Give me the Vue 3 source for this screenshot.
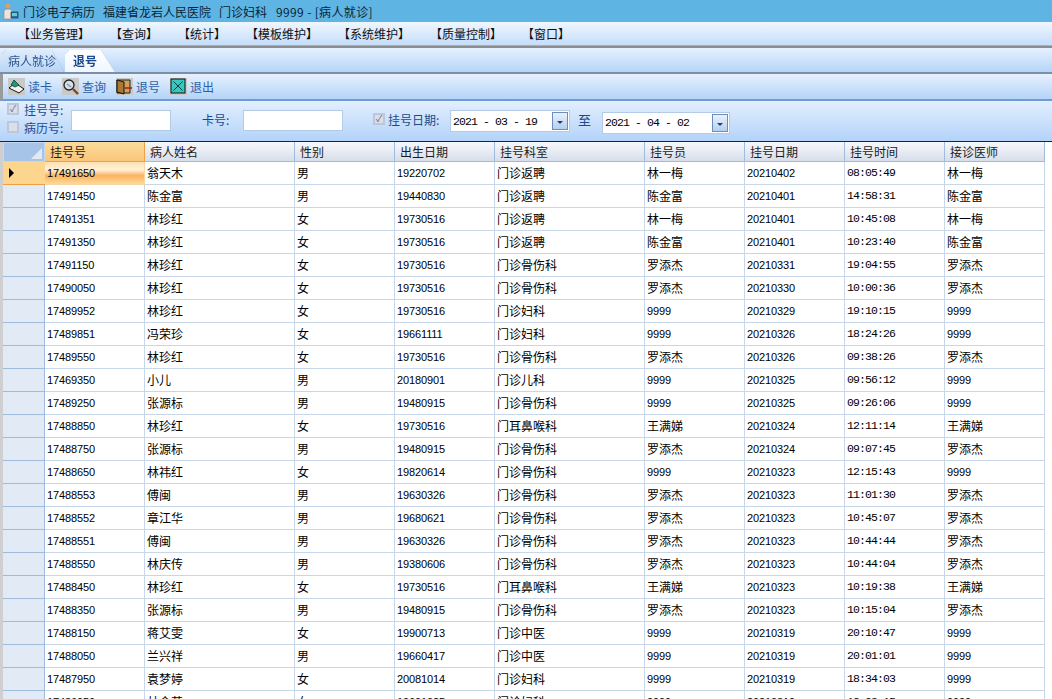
<script setup>
const columns = [
  { label: '挂号号', width: 100 },
  { label: '病人姓名', width: 150 },
  { label: '性别', width: 100 },
  { label: '出生日期', width: 100 },
  { label: '挂号科室', width: 150 },
  { label: '挂号员', width: 100 },
  { label: '挂号日期', width: 100 },
  { label: '挂号时间', width: 100 },
  { label: '接诊医师', width: 100 },
]
const kinds = ['num', 'zh', 'zh', 'num', 'zh', 'auto', 'num', 'time', 'auto']
const raw = `17491650 翁天木 男 19220702 门诊返聘 林一梅 20210402 08:05:49 林一梅
17491450 陈金富 男 19440830 门诊返聘 陈金富 20210401 14:58:31 陈金富
17491351 林珍红 女 19730516 门诊返聘 林一梅 20210401 10:45:08 林一梅
17491350 林珍红 女 19730516 门诊返聘 陈金富 20210401 10:23:40 陈金富
17491150 林珍红 女 19730516 门诊骨伤科 罗添杰 20210331 19:04:55 罗添杰
17490050 林珍红 女 19730516 门诊骨伤科 罗添杰 20210330 10:00:36 罗添杰
17489952 林珍红 女 19730516 门诊妇科 9999 20210329 19:10:15 9999
17489851 冯荣珍 女 19661111 门诊妇科 9999 20210326 18:24:26 9999
17489550 林珍红 女 19730516 门诊骨伤科 罗添杰 20210326 09:38:26 罗添杰
17469350 小儿 男 20180901 门诊儿科 9999 20210325 09:56:12 9999
17489250 张源标 男 19480915 门诊骨伤科 9999 20210325 09:26:06 9999
17488850 林珍红 女 19730516 门耳鼻喉科 王满娣 20210324 12:11:14 王满娣
17488750 张源标 男 19480915 门诊骨伤科 罗添杰 20210324 09:07:45 罗添杰
17488650 林祎红 女 19820614 门诊骨伤科 9999 20210323 12:15:43 9999
17488553 傅闽 男 19630326 门诊骨伤科 罗添杰 20210323 11:01:30 罗添杰
17488552 章江华 男 19680621 门诊骨伤科 罗添杰 20210323 10:45:07 罗添杰
17488551 傅闽 男 19630326 门诊骨伤科 罗添杰 20210323 10:44:44 罗添杰
17488550 林庆传 男 19380606 门诊骨伤科 罗添杰 20210323 10:44:04 罗添杰
17488450 林珍红 女 19730516 门耳鼻喉科 王满娣 20210323 10:19:38 王满娣
17488350 张源标 男 19480915 门诊骨伤科 罗添杰 20210323 10:15:04 罗添杰
17488150 蒋艾雯 女 19900713 门诊中医 9999 20210319 20:10:47 9999
17488050 兰兴祥 男 19660417 门诊中医 9999 20210319 20:01:01 9999
17487950 袁梦婷 女 20081014 门诊妇科 9999 20210319 18:34:03 9999
17486950 林金英 女 19691025 门诊妇科 9999 20210319 18:03:15 9999`
const rows = raw.split('\n').map((l) => l.split(' '))
const menus = ['【业务管理】', '【查询】', '【统计】', '【模板维护】', '【系统维护】', '【质量控制】', '【窗口】']
const cellClass = (v, i) => {
  const k = kinds[i]
  if (k === 'time') return 'time'
  if (k === 'num' || (k === 'auto' && /^\d+$/.test(v))) return 'num'
  return ''
}
</script>

<template>
  <div class="app">
    <header class="titlebar">
      <svg class="appicon" width="18" height="18" viewBox="0 0 18 18">
        <circle cx="6" cy="4" r="2.5" fill="#d9a06a" />
        <path d="M2 17V9q0-2 4-2t4 2v8z" fill="#e9e4dc" stroke="#8a7f78" stroke-width=".6" />
        <rect x="9" y="10" width="7" height="6" fill="#2f6fb0" stroke="#223" stroke-width=".6" />
        <rect x="10" y="11" width="5" height="3" fill="#5fd0c8" />
      </svg>
      <span class="title">门诊电子病历</span>
      <span class="title org">福建省龙岩人民医院</span>
      <span class="title dept">门诊妇科</span>
      <span class="title user">9999 - [病人就诊]</span>
    </header>

    <nav class="menubar">
      <span v-for="m in menus" :key="m" class="menu">{{ m }}</span>
    </nav>

    <div class="tabstrip">
      <div class="tabwrap"><div class="tab inactive">病人就诊</div></div>
      <div class="tabwrap top"><div class="tab active">退号</div></div>
    </div>

    <div class="toolbar">
      <button class="tool">
        <svg width="17" height="17" viewBox="0 0 17 17">
          <rect width="17" height="17" fill="#c9c9c9" />
          <path d="M1 10l6-5 9 6-5 4z" fill="#f4f4f0" stroke="#111" stroke-width="1" />
          <path d="M3 7l3-5 5 5-4 2z" fill="#1f9a78" stroke="#0b3f33" stroke-width=".8" />
        </svg>
        读卡
      </button>
      <button class="tool">
        <svg width="17" height="17" viewBox="0 0 17 17">
          <rect width="17" height="17" fill="#c9c9c9" />
          <circle cx="7" cy="7" r="5" fill="#d8dfe8" stroke="#222" stroke-width="1.3" />
          <path d="M11 11l5 5" stroke="#7a4a18" stroke-width="2.4" />
          <path d="M5 6l4 3" stroke="#8893a3" stroke-width="1.5" />
        </svg>
        查询
      </button>
      <button class="tool">
        <svg width="17" height="17" viewBox="0 0 17 17">
          <rect width="17" height="17" fill="#c9c9c9" />
          <path d="M1 2h13v13H1z" fill="#caa25a" stroke="#222" />
          <path d="M1 2l7 2v12l-7-2z" fill="#a8792e" stroke="#111" />
          <path d="M9 10h7" stroke="#c01818" stroke-width="1.6" />
        </svg>
        退号
      </button>
      <button class="tool">
        <svg width="17" height="17" viewBox="0 0 17 17">
          <rect width="17" height="17" fill="#c9c9c9" />
          <rect x="1" y="1" width="14" height="14" fill="#35c9c0" stroke="#111" />
          <path d="M3.5 3.5l9 9M12.5 3.5l-9 9" stroke="#17323a" stroke-width="1" />
        </svg>
        退出
      </button>
    </div>

    <form class="filter" @submit.prevent>
      <div class="checks">
        <label class="check-row"><span class="chk on">✓</span>挂号号:</label>
        <label class="check-row"><span class="chk"></span>病历号:</label>
      </div>
      <input class="field" />
      <span class="card-label">卡号:</span>
      <input class="field" />
      <label class="date-check"><span class="chk on">✓</span>挂号日期:</label>
      <div class="datebox first">
        <span class="datetext">2021 - 03 - 19</span>
        <span class="drop"><i></i></span>
      </div>
      <span class="to">至</span>
      <div class="datebox second">
        <span class="datetext">2021 - 04 - 02</span>
        <span class="drop"><i></i></span>
      </div>
    </form>

    <section class="grid">
      <div class="row head">
        <div class="rowhead corner"><i></i></div>
        <div
          v-for="(c, i) in columns"
          :key="c.label"
          class="hcell"
          :class="{ sorted: i === 0 }"
          :style="{ width: c.width + 'px' }"
        >{{ c.label }}</div>
      </div>
      <div v-for="(r, ri) in rows" :key="ri" class="row body" :class="{ current: ri === 0 }">
        <div class="rowhead"><b v-if="ri === 0"></b></div>
        <div
          v-for="(v, i) in r"
          :key="i"
          class="cell"
          :class="[cellClass(v, i), { focus: ri === 0 && i === 0 }]"
          :style="{ width: columns[i].width + 'px' }"
        >{{ v }}</div>
      </div>
    </section>
  </div>
</template>

<style>
html, body { margin: 0; height: 100%; overflow: hidden; background: #fff; }
</style>

<style scoped>
.app {
  width: 1052px;
  height: 699px;
  overflow: hidden;
  font-family: "Noto Sans CJK SC", "Liberation Sans", sans-serif;
  background: #fff;
}
.titlebar {
  height: 22px;
  background: #5eb5e4;
  display: flex;
  align-items: center;
  padding-left: 2px;
  gap: 3px;
  color: #0c1f36;
  font-size: 12px;
}
.title { white-space: pre; }
.org { margin-left: 5px; }
.dept { margin-left: 5px; }
.user { margin-left: 6px; letter-spacing: .35px; }
.menubar {
  height: 24px;
  background: linear-gradient(#f0f6fe, #c5defa);
  border-bottom: 1px solid #8fb4de;
  display: flex;
  align-items: center;
  padding-left: 18px;
  font-size: 12px;
  color: #101010;
  box-sizing: border-box;
}
.menu { width: 92px; white-space: nowrap; flex: none; }
.menu:nth-child(2), .menu:nth-child(3) { width: 68px; }
.tabstrip {
  height: 28px;
  box-sizing: border-box;
  border-top: 2px solid #8d8d8d;
  border-bottom: 2px solid #7c8ea8;
  background: linear-gradient(#e6f1fe, #b5d5f8);
  display: flex;
  align-items: flex-end;
  padding-left: 2px;
}
.tabwrap { filter: drop-shadow(0 0 .6px #6f93c4); }
.tabwrap.top { margin-left: 1px; }
.tab {
  display: flex;
  align-items: center;
  font-size: 12px;
  box-sizing: border-box;
  padding: 0 0 2px 6px;
}
.inactive {
  width: 62px;
  height: 22px;
  color: #2a5590;
  background: linear-gradient(#dfecfc, #b9d5f5);
  clip-path: polygon(0 4px, 4px 0, 50px 0, 62px 100%, 0 100%);
}
.active {
  width: 50px;
  height: 22px;
  padding-left: 8px;
  font-weight: 700;
  color: #1a4a8c;
  background: linear-gradient(#ffffff, #f0f6fe);
  clip-path: polygon(0 4px, 4px 0, 36px 0, 50px 100%, 0 100%);
}
.toolbar {
  height: 27px;
  box-sizing: border-box;
  border-left: 3px solid #9a9a9a;
  border-bottom: 2px solid #6d9bd6;
  background: linear-gradient(#e6f1fe, #b4d4f8);
  display: flex;
  align-items: center;
  padding-left: 5px;
  gap: 6px;
}
.tool {
  all: unset;
  display: flex;
  align-items: center;
  gap: 3px;
  font-size: 12px;
  color: #2d5fa8;
  width: 48px;
}
.filter {
  height: 41px;
  box-sizing: border-box;
  background: linear-gradient(#e3effe, #b3d3f9);
  border-bottom: 1px solid #11253f;
  display: flex;
  align-items: center;
  padding: 0 0 4px 7px;
  font-size: 12px;
  color: #1a4a8c;
}
.checks { display: flex; flex-direction: column; width: 64px; flex: none; margin-bottom: 2px; }
.check-row, .date-check { display: flex; align-items: center; height: 18px; gap: 3px; white-space: nowrap; }
.check-row { gap: 5px; }
.chk {
  width: 12px;
  height: 12px;
  box-sizing: border-box;
  flex: none;
  border: 2px solid #b9c8dd;
  background: #dcdfe6;
  font-size: 9px;
  line-height: 8px;
  text-align: center;
  color: #4f6c9c;
}
.field {
  width: 100px;
  height: 21px;
  box-sizing: border-box;
  border: 1px solid #b3cbe6;
  background: #fff;
  flex: none;
  padding: 0;
  margin-top: 2px;
}
.card-label { width: 72px; flex: none; padding-left: 31px; box-sizing: border-box; white-space: nowrap; }
.date-check { margin: 0 0 0 30px; width: 77px; flex: none; }
.datebox {
  width: 120px;
  height: 22px;
  box-sizing: border-box;
  border: 1px solid #b3cbe6;
  background: #fff;
  display: flex;
  align-items: center;
  justify-content: space-between;
  flex: none;
}
.datebox.first { margin-top: 4px; }
.datebox.second { margin: 7px 0 0 11px; width: 128px; }
.datetext {
  font-family: "Liberation Mono", monospace;
  font-size: 11.5px;
  color: #000;
  padding-left: 2px;
  white-space: pre;
  letter-spacing: -.9px;
}
.drop {
  width: 14px;
  height: 16px;
  margin-right: 1px;
  border: 1px solid #6d8db8;
  background: linear-gradient(#e9f2fd, #b4d0f0);
  display: flex;
  align-items: center;
  justify-content: center;
}
.drop i {
  width: 0;
  height: 0;
  margin-top: 3px;
  border: 3px solid transparent;
  border-top: 3px solid #1f3f77;
  border-bottom: 0;
}
.to { margin: 0 0 0 8px; font-size: 13px; width: 13px; flex: none; }
.grid {
  height: 557px;
  overflow: hidden;
  box-sizing: border-box;
  border-left: 3px solid #777;
  border-image: linear-gradient(to right, #cfcfcf 1px, #666 1px) 1;
  background: #fff;
}
.row { display: flex; width: 1042px; }
.rowhead {
  width: 42px;
  flex: none;
  box-sizing: border-box;
  background: #e2eaf6;
  border-right: 1px solid #a0bcdc;
  border-bottom: 1px solid #a0bcdc;
  display: flex;
  align-items: center;
  padding-left: 6px;
}
.head { height: 20px; }
.corner {
  background: #a6c3e8;
  position: relative;
  border: 1px solid #c6d8ef;
}
.corner i {
  position: absolute;
  right: 2px;
  bottom: 2px;
  width: 0;
  height: 0;
  border-left: 11px solid transparent;
  border-bottom: 11px solid #e3e9f3;
}
.hcell {
  height: 20px;
  box-sizing: border-box;
  flex: none;
  font-size: 12px;
  color: #1b1b1b;
  background: linear-gradient(#f7f8fb, #d7deeb);
  border-right: 1px solid #a0bcdc;
  border-bottom: 1px solid #a0bcdc;
  padding-left: 5px;
  display: flex;
  align-items: center;
}
.hcell.sorted {
  background: linear-gradient(#fbdc9a, #f9c67a);
  border-right: 1px solid #f0a040;
  border-bottom: 1px solid #f0a040;
}
.body { height: 23px; }
.cell {
  height: 23px;
  box-sizing: border-box;
  flex: none;
  border-right: 1px solid #c8d6ea;
  border-bottom: 1px solid #c8d6ea;
  padding: 0 0 2px 2px;
  display: flex;
  align-items: center;
  font-size: 12px;
  color: #000;
  white-space: nowrap;
}
.cell.num {
  font-family: "Liberation Sans", sans-serif;
  font-size: 11px;
  letter-spacing: -.12px;
  padding-bottom: 1px;
}
.cell.time {
  font-family: "Liberation Mono", monospace;
  font-size: 11.5px;
  letter-spacing: -.9px;
  padding-bottom: 1px;
}
.current .rowhead {
  background: #fcd58e;
  border-bottom: 1px solid #f0a040;
  border-right: 0;
}
.current .rowhead b {
  width: 0;
  height: 0;
  border-left: 5px solid #000;
  border-top: 5px solid transparent;
  border-bottom: 5px solid transparent;
}
.cell.focus {
  background: linear-gradient(#fde0b2 0%, #fff1d8 35%, #fbb35f 62%, #fcd99b 100%);
  border-color: #f8d7a0;
}
</style>
